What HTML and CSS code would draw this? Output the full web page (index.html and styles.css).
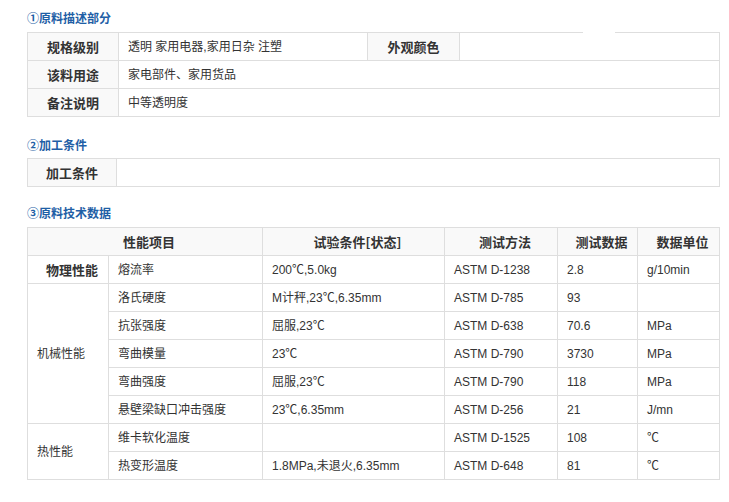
FILE: index.html
```html
<!DOCTYPE html>
<html lang="zh-CN">
<head>
<meta charset="utf-8">
<title>原料物性</title>
<link rel="stylesheet" href="styles.css">
</head>
<body>
<div class="page">
  <h3 class="sec-title first">①原料描述部分</h3>
  <div class="tbl-wrap">
    <span class="border-gap"></span>
    <table class="grid t1">
      <colgroup><col class="c91"><col class="c249"><col class="c92"><col></colgroup>
      <tr><th>规格级别</th><td>透明 家用电器,家用日杂 注塑</td><th>外观颜色</th><td></td></tr>
      <tr><th>该料用途</th><td colspan="3">家电部件、家用货品</td></tr>
      <tr><th>备注说明</th><td colspan="3">中等透明度</td></tr>
    </table>
  </div>

  <h3 class="sec-title second">②加工条件</h3>
  <table class="grid t2">
    <colgroup><col class="c89"><col></colgroup>
    <tr><th>加工条件</th><td></td></tr>
  </table>

  <h3 class="sec-title third">③原料技术数据</h3>
  <table class="grid t3">
    <colgroup><col class="c81"><col class="c154"><col class="c182"><col class="c113"><col class="c80"><col></colgroup>
    <tr class="head"><th colspan="2">性能项目</th><th>试验条件[状态]</th><th>测试方法</th><th>测试数据</th><th>数据单位</th></tr>
    <tr><th class="plain">物理性能</th><td>熔流率</td><td>200℃,5.0kg</td><td>ASTM D-1238</td><td>2.8</td><td>g/10min</td></tr>
    <tr><td rowspan="5">机械性能</td><td>洛氏硬度</td><td>M计秤,23℃,6.35mm</td><td>ASTM D-785</td><td>93</td><td></td></tr>
    <tr><td>抗张强度</td><td>屈服,23℃</td><td>ASTM D-638</td><td>70.6</td><td>MPa</td></tr>
    <tr><td>弯曲模量</td><td>23℃</td><td>ASTM D-790</td><td>3730</td><td>MPa</td></tr>
    <tr><td>弯曲强度</td><td>屈服,23℃</td><td>ASTM D-790</td><td>118</td><td>MPa</td></tr>
    <tr><td>悬壁梁缺口冲击强度</td><td>23℃,6.35mm</td><td>ASTM D-256</td><td>21</td><td>J/mn</td></tr>
    <tr><td rowspan="2">热性能</td><td>维卡软化温度</td><td></td><td>ASTM D-1525</td><td>108</td><td>℃</td></tr>
    <tr><td>热变形温度</td><td>1.8MPa,未退火,6.35mm</td><td>ASTM D-648</td><td>81</td><td>℃</td></tr>
  </table>
</div>
</body>
</html>
```

FILE: styles.css
```css
html, body {
  margin: 0;
  padding: 0;
  background: #ffffff;
}

body {
  font-family: "Liberation Sans", "Noto Sans CJK SC", sans-serif;
  font-size: 12px;
  color: #333333;
}

.page {
  padding: 0 10px 0 27px;
  width: 693px;
}

.sec-title {
  margin: 0 0 4px 0;
  height: 20px;
  line-height: 20px;
  font-size: 12px;
  font-weight: bold;
  color: #1f5fa6;
  font-family: "Noto Sans CJK SC", sans-serif;
}

.sec-title.first { margin-top: 8px; }
.sec-title.second { margin-top: 18px; margin-bottom: 3px; }
.sec-title.third { margin-top: 16px; margin-bottom: 4px; }

.tbl-wrap {
  position: relative;
}

.border-gap {
  position: absolute;
  left: 556px;
  top: 0;
  width: 32px;
  height: 1px;
  background: #ffffff;
  z-index: 1;
}

.grid {
  width: 693px;
  border-collapse: collapse;
  table-layout: fixed;
}

.grid th,
.grid td {
  border: 1px solid #dedede;
  height: 27px;
  padding: 0 9px;
  vertical-align: middle;
  white-space: nowrap;
  overflow: hidden;
  line-height: 16px;
}

.grid td {
  text-align: left;
  font-weight: normal;
}

.grid th {
  font-family: "Noto Sans CJK SC", sans-serif;
  font-size: 13px;
  font-weight: bold;
  color: #333333;
  text-align: center;
  background: #f9f9f9;
  padding: 0 4px;
}

.t3 th {
  padding: 0 0 0 8px;
}

.t3 th.plain {
  background: #ffffff;
}

.c91 { width: 91px; }
.c249 { width: 249px; }
.c92 { width: 92px; }
.c89 { width: 89px; }
.c81 { width: 81px; }
.c154 { width: 154px; }
.c182 { width: 182px; }
.c113 { width: 113px; }
.c80 { width: 80px; }
```
